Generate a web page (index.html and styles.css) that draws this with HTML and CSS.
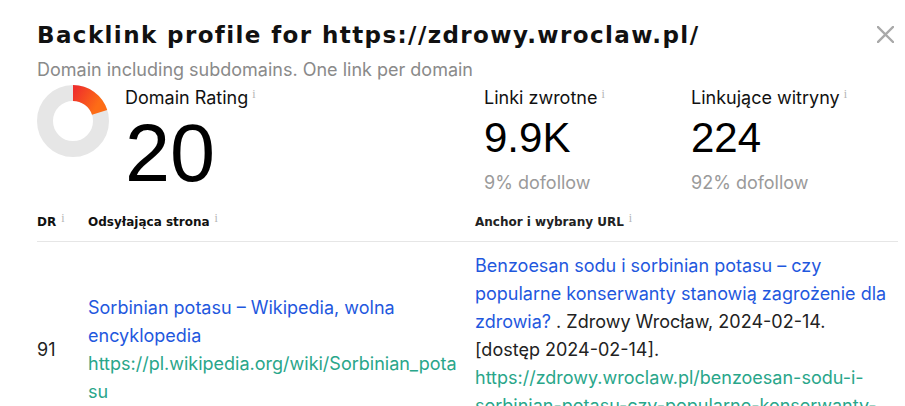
FILE: index.html
```html
<!DOCTYPE html>
<html lang="pl">
<head>
<meta charset="utf-8">
<title>Backlink profile</title>
<link rel="stylesheet" href="styles.css">
</head>
<body>
<div class="modal">
  <div class="head">
    <h1 class="title">Backlink profile for https://zdrowy.wroclaw.pl/</h1>
    <button class="close" aria-label="Close">
      <svg width="17" height="17" viewBox="0 0 17 17"><path d="M1 1L16 16M16 1L1 16" stroke="#a9a9a9" stroke-width="2.4" stroke-linecap="square"/></svg>
    </button>
  </div>
  <p class="sub">Domain including subdomains. One link per domain</p>

  <div class="stats">
    <svg class="donut" width="72" height="72" viewBox="0 0 72 72">
      <defs>
        <linearGradient id="g" x1="0" y1="0" x2="1" y2="0.4">
          <stop offset="0" stop-color="#ef2f2b"/>
          <stop offset="1" stop-color="#fd6c16"/>
        </linearGradient>
      </defs>
      <circle cx="36" cy="36" r="28" fill="none" stroke="#e6e6e6" stroke-width="16"/>
      <path d="M36 8 A28 28 0 0 1 62.63 27.35" fill="none" stroke="url(#g)" stroke-width="16"/>
    </svg>
    <div class="stat dr">
      <div class="label">Domain Rating<span class="info">i</span></div>
      <div class="big">20</div>
    </div>
    <div class="stat bl">
      <div class="label">Linki zwrotne<span class="info">i</span></div>
      <div class="mid">9.9K</div>
      <div class="note">9% dofollow</div>
    </div>
    <div class="stat rd">
      <div class="label">Linkujące witryny<span class="info">i</span></div>
      <div class="mid">224</div>
      <div class="note">92% dofollow</div>
    </div>
  </div>

  <div class="table">
    <div class="thead">
      <div class="c1">DR<span class="info">i</span></div>
      <div class="c2">Odsyłająca strona<span class="info">i</span></div>
      <div class="c3">Anchor i wybrany URL<span class="info">i</span></div>
    </div>
    <div class="row">
      <div class="c1 num">91</div>
      <div class="c2">
        <a class="blue" href="#">Sorbinian potasu – Wikipedia, wolna encyklopedia</a><br>
        <a class="green" href="#">https://pl.wikipedia.org/wiki/Sorbinian_potasu</a>
      </div>
      <div class="c3">
        <a class="blue" href="#">Benzoesan sodu i sorbinian potasu – czy popularne konserwanty stanowią zagrożenie dla zdrowia?</a> . Zdrowy Wrocław, 2024-02-14. [dostęp 2024-02-14].
        <a class="green" href="#">https://zdrowy.wroclaw.pl/benzoesan-sodu-i-sorbinian-potasu-czy-popularne-konserwanty-stanowia-zagrozenie-dla-zdrowia/</a>
      </div>
    </div>
  </div>
</div>
</body>
</html>
```

FILE: styles.css
```css
* { box-sizing: border-box; }
html, body { margin: 0; padding: 0; background: #fff; }
body { font-family: Inter, "Noto Sans", sans-serif; color: #222; overflow: hidden; }

.modal { padding: 18px 7px 0 37px; width: 905px; }

.head { display: flex; justify-content: space-between; align-items: flex-start; }
.title {
  margin: 0;
  font-family: "DejaVu Sans", sans-serif;
  font-weight: 700;
  font-size: 23px;
  line-height: 34px;
  color: #111;
  letter-spacing: 1.4px;
  white-space: nowrap;
}
.close {
  border: 0; background: none; padding: 0; margin: 8px 4px 0 0;
  width: 17px; height: 17px; display: block; cursor: pointer; flex: none;
}
.close svg { display: block; }

.sub { margin: 7px 0 0; font-size: 18px; line-height: 22px; color: #8a8a8a; }

.stats { display: flex; margin-top: 4px; }
.donut { display: block; flex: none; }
.stat { display: flex; flex-direction: column; }
.dr { margin-left: 16px; width: 359px; }
.bl { width: 207px; }
.label { font-size: 18px; line-height: 22px; color: #111; margin-top: 2px; }
.info {
  font-family: "Liberation Serif", serif;
  font-size: 12px; line-height: 12px; color: #b5b5b5; vertical-align: top; margin-left: 4px;
  position: relative; top: 1px;
}
.big {
  font-family: "Liberation Sans", Arial, sans-serif;
  font-size: 81px; line-height: 80px; color: #000; margin-top: 4px;
}
.mid {
  font-family: "Liberation Sans", Arial, sans-serif;
  font-size: 42px; line-height: 42px; color: #000; margin-top: 8px;
}
.note { font-size: 18px; line-height: 22px; color: #9a9a9a; margin-top: 13px; }

.table { margin-top: 19px; width: 861px; }
.thead {
  display: grid; grid-template-columns: 51px 387px 1fr;
  font-family: "DejaVu Sans", sans-serif;
  font-weight: 700; font-size: 12px; line-height: 18px; color: #111;
  padding-bottom: 10px; border-bottom: 1px solid #e6e6e6;
}
.thead .info { font-weight: 400; top: -1px; margin-left: 5px; }
.row {
  display: grid; grid-template-columns: 51px 387px 1fr;
  align-items: center; padding-top: 10px;
  font-size: 18px; line-height: 28px;
}
.row .c2 { padding-right: 15px; }
.row .c3 { padding-right: 7px; }
.num { color: #222; }
.blue { color: #1f58de; text-decoration: none; }
.green { color: #29a68a; text-decoration: none; overflow-wrap: anywhere; }
.c3 { color: #222; }
```
